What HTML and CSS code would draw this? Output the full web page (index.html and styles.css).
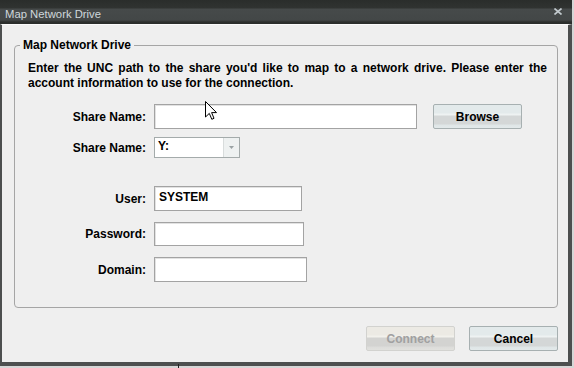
FILE: index.html
```html
<!DOCTYPE html>
<html>
<head>
<meta charset="utf-8">
<link rel="stylesheet" href="styles.css">
</head>
<body>
<div class="window">
  <div class="titlebar">
    <span class="title">Map Network Drive</span>
    <svg class="close" width="8" height="7" viewBox="0 0 8 7"><path d="M0.5 0.5 L7.5 6.5 M7.5 0.5 L0.5 6.5" stroke="#c3cbcf" stroke-width="1.6" fill="none"/></svg>
  </div>
  <div class="frame">
    <fieldset class="group">
      <legend>Map Network Drive</legend>
      <p class="desc">Enter the UNC path to the share you'd like to map to a network drive. Please enter the account information to use for the connection.</p>
      <div class="form">
        <div class="row r-share">
          <span class="label">Share Name:</span>
          <div class="field w-share"></div>
          <button class="btn browse">Browse</button>
        </div>
        <div class="row r-drive">
          <span class="label">Share Name:</span>
          <div class="select"><span class="value">Y:</span><span class="arrow"><svg width="5" height="3" viewBox="0 0 5 3"><path d="M0 0 H5 L2.5 3 Z" fill="#9aa2a4"/></svg></span></div>
        </div>
        <div class="row r-user">
          <span class="label">User:</span>
          <div class="field w-user">SYSTEM</div>
        </div>
        <div class="row r-pass">
          <span class="label">Password:</span>
          <div class="field w-pass"></div>
        </div>
        <div class="row r-domain">
          <span class="label">Domain:</span>
          <div class="field w-domain"></div>
        </div>
      </div>
    </fieldset>
    <div class="actions">
      <button class="btn disabled">Connect</button>
      <button class="btn">Cancel</button>
    </div>
  </div>
</div>
<svg class="cursor" width="13" height="20" viewBox="0 0 13 20"><path d="M0.5 0.5 L0.5 16 L4.3 12.4 L6.8 18.3 L9 17.3 L6.6 11.6 L11.5 11.6 Z" fill="#fff" stroke="#000" stroke-width="1" stroke-linejoin="miter"/></svg>
<span class="tick"></span>
</body>
</html>
```

FILE: styles.css
```css
html, body {
  margin: 0;
  padding: 0;
}
body {
  width: 574px;
  height: 368px;
  overflow: hidden;
  position: relative;
  background: #d6d6d6;
  font-family: "Liberation Sans", Arial, sans-serif;
  font-size: 12px;
  color: #000;
}
.window {
  width: 572px;
}
.titlebar {
  height: 24px;
  box-sizing: border-box;
  display: flex;
  align-items: center;
  justify-content: space-between;
  padding: 3px 10px 0 5px;
  background: linear-gradient(to bottom, #2a2d2b 0px, #303331 8px, #464a4a 9px, #434747 20px, #2c2f2d 22px, #2a2d2b 24px);
  color: #cfd7db;
  font-size: 11.3px;
}
.close {
  display: block;
  margin-top: -4px;
}
.frame {
  height: 342px;
  box-sizing: border-box;
  background: #efefef;
  border-top: 1px solid #fbfbfb;
  border-left: 2px solid #4d4f4f;
  border-right: 4px solid #4d4f4f;
  border-bottom: 4px solid #4d4f4f;
  padding: 0 10px 0 12px;
}
.group {
  margin: 13px 0 0 0;
  padding: 0 0 25px 5px;
  border: 1px solid #a5a5a5;
  border-radius: 4px;
  min-width: 0;
}
.group legend {
  padding: 0 3px;
  font-weight: bold;
  font-size: 12px;
  line-height: 15px;
}
.desc {
  margin: 8px 10px 0 8px;
  font-weight: bold;
  line-height: 15px;
  text-align: justify;
}
.form {
  margin-top: 13px;
}
.row {
  display: flex;
  align-items: center;
}
.label {
  width: 126px;
  margin-right: 8px;
  text-align: right;
  font-weight: bold;
}
.field {
  box-sizing: border-box;
  height: 25px;
  background: #fff;
  border: 1px solid #a3a3a3;
  box-shadow: inset 1px 1px 0 #e2e2e2;
  padding: 3px 0 0 4px;
  line-height: 14px;
  font-weight: bold;
}
.r-share { height: 25px; }
.r-drive { height: 21px; margin-top: 8px; }
.r-user { height: 25px; margin-top: 28px; }
.r-pass { height: 24px; margin-top: 11px; }
.r-domain { height: 25px; margin-top: 11px; }
.w-share { width: 263px; }
.w-user { width: 148px; }
.w-pass { width: 150px; height: 24px; }
.w-domain { width: 153px; }
.select {
  box-sizing: border-box;
  width: 86px;
  height: 21px;
  display: flex;
  background: #fff;
  border: 1px solid #a4abab;
}
.select .value {
  flex: 1;
  padding-left: 3px;
  line-height: 17px;
  font-weight: bold;
}
.select .arrow {
  width: 15px;
  display: flex;
  align-items: center;
  justify-content: center;
  background: #eef1f1;
  border-left: 1px solid #d8dcdc;
}
.btn {
  box-sizing: border-box;
  width: 89px;
  height: 25px;
  padding: 0;
  border: 1px solid #a7b0b1;
  border-radius: 2px;
  background: linear-gradient(to bottom, #e3eaeb 0px, #e3eaeb 8px, #eef2f2 9px, #eef2f2 10px, #d4d7d7 11px, #d4d7d7 19px, #dfe6e7 20px, #e4eaeb 24px);
  font-family: "Liberation Sans", Arial, sans-serif;
  font-size: 12px;
  font-weight: bold;
  color: #000;
}
.browse {
  margin-left: 16px;
}
.btn.disabled {
  color: #a0a0a0;
  border-color: #d2d2cf;
  background: linear-gradient(to bottom, #eceae4 0px, #eceae4 8px, #f2f1ec 9px, #f2f1ec 10px, #d3d3d1 11px, #d3d3d1 19px, #dcdcda 20px, #e2e2df 24px);
}
.actions {
  display: flex;
  justify-content: flex-end;
  gap: 14px;
  margin-top: 18px;
}
.cursor {
  position: absolute;
  left: 205px;
  top: 101px;
}
.tick {
  position: absolute;
  left: 178px;
  top: 364px;
  width: 1px;
  height: 4px;
  background: #222;
}
```
